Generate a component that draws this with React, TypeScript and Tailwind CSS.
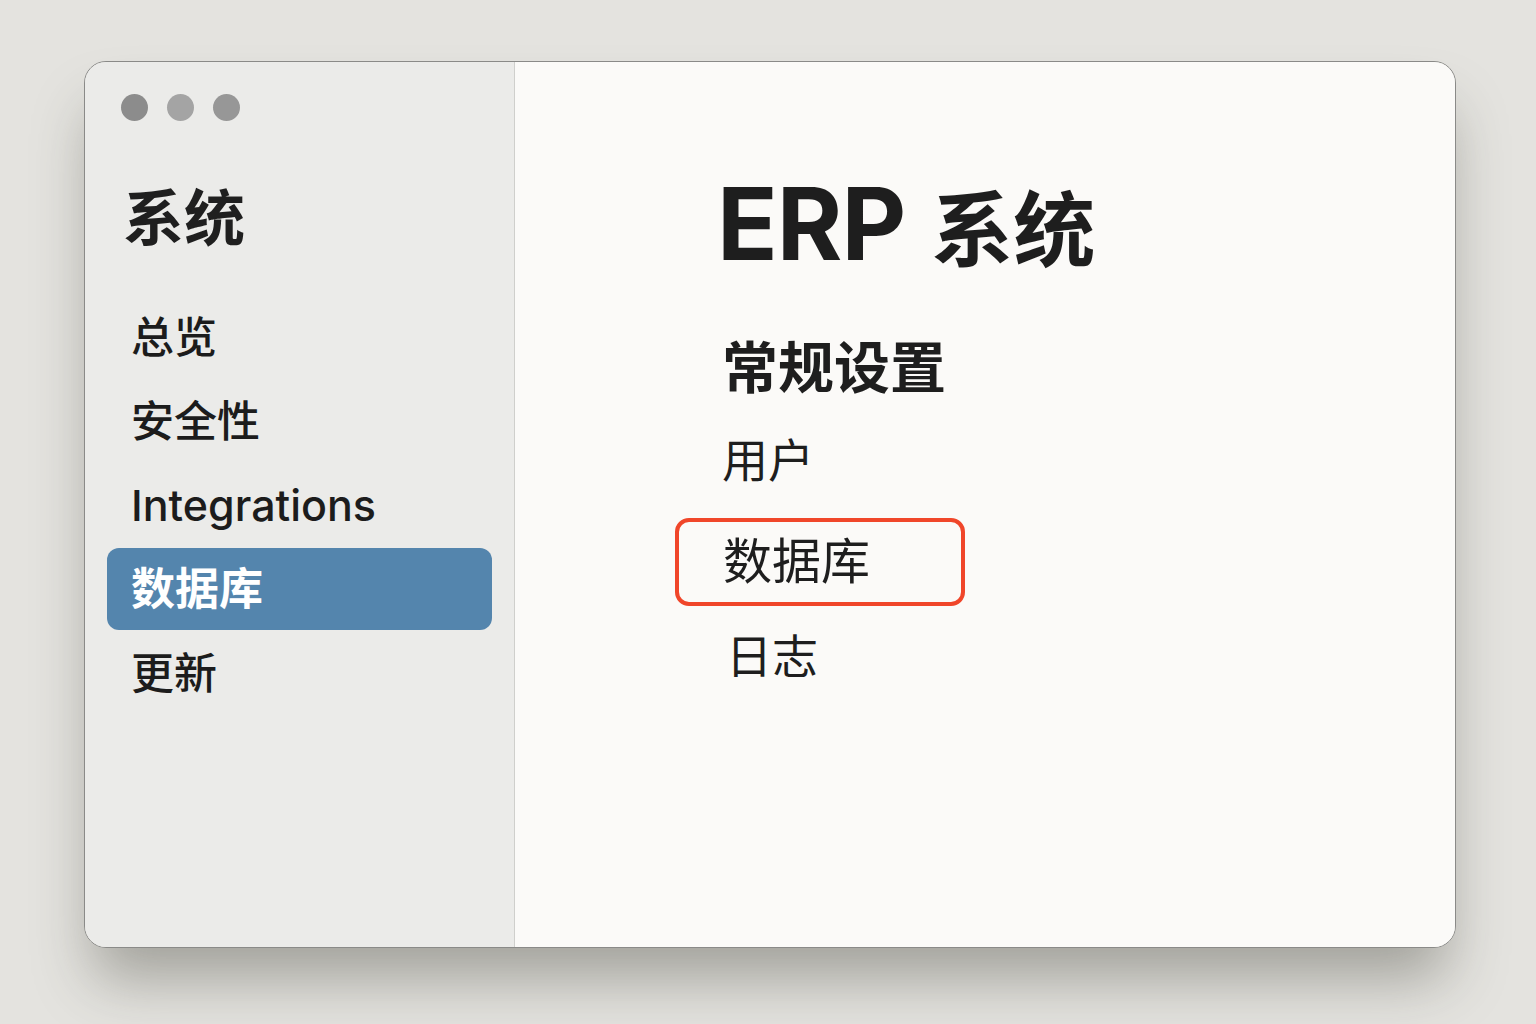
import React from 'react'

const cjk = "font-['Inter','Noto_Sans_CJK_SC',sans-serif]"

const navItems = ['总览', '安全性', 'Integrations', '数据库', '更新']

function TrafficLights() {
  return (
    <div className="flex gap-[19px] pl-[36px] pt-[32px]">
      <div className="size-[27px] rounded-full bg-[#8c8c8c]" />
      <div className="size-[27px] rounded-full bg-[#a4a4a4]" />
      <div className="size-[27px] rounded-full bg-[#979797]" />
    </div>
  )
}

function Sidebar() {
  return (
    <aside className="w-[430px] shrink-0 bg-[#ebebe9] border-r border-[#cfcfcc] flex flex-col">
      <TrafficLights />
      <h1 className="pl-[38px] mt-[68px] text-[61px] leading-none font-bold text-[#1f1f1f]">系统</h1>

      <nav className="mt-[45px] px-[22px] flex flex-col">
        {navItems.map((item) => {
          const active = item === '数据库'
          return (
            <div
              key={item}
              className={
                active
                  ? 'h-[82px] my-[1px] flex items-center pl-[24px] rounded-[12px] bg-[#5485ad] text-white font-bold text-[44px]'
                  : 'h-[84px] flex items-center pl-[24px] text-[#1c1c1c] text-[43px] font-medium'
              }
            >
              {item}
            </div>
          )
        })}
      </nav>
    </aside>
  )
}

function MainPanel() {
  return (
    <main className="flex-1 bg-[#fbfaf8] flex flex-col pl-[160px]">
      <h2 className="mt-[112px] pl-[42px] leading-none font-bold text-[#1e1e1e] flex items-baseline">
        <span className="text-[100px] tracking-[-1px]">ERP</span>
        <span className="text-[82px] ml-[26px]">系统</span>
      </h2>
      <h3 className="mt-[66px] pl-[47px] text-[56px] leading-none font-bold text-[#1e1e1e]">常规设置</h3>

      <div className="mt-[19px] flex flex-col items-start">
        <div className="h-[90px] flex items-center pl-[47px] text-[46px] text-[#1e1e1e]">用户</div>
        <div className="mt-[13px] w-[290px] h-[88px] flex items-center pl-[44px] border-[4px] border-[#f0462a] rounded-[14px] text-[49px] text-[#1e1e1e]">
          数据库
        </div>
        <div className="h-[100px] flex items-center pl-[51px] text-[46px] text-[#1e1e1e]">日志</div>
      </div>
    </main>
  )
}

export default function App() {
  return (
    <div className={`min-h-screen w-full bg-[#e4e3df] pt-[61px] pl-[84px] ${cjk}`}>
      <div className="w-[1372px] h-[887px] flex overflow-hidden rounded-[22px] border border-[#8a8a88] shadow-[0_40px_60px_-10px_rgba(60,60,50,0.4)]">
        <Sidebar />
        <MainPanel />
      </div>
    </div>
  )
}
